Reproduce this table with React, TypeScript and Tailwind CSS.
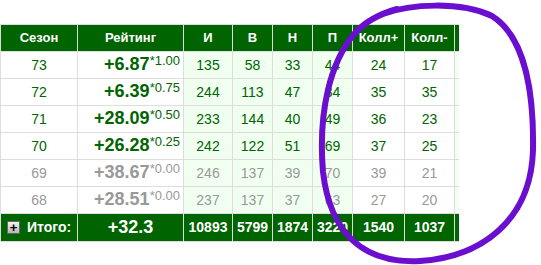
import React from 'react';

type Row = {
  season: number;
  rating: string;
  coef: string;
  i: number;
  v: number;
  n: number;
  p: number;
  plus: number;
  minus: number;
  old?: boolean;
};

const rows: Row[] = [
  { season: 73, rating: '+6.87', coef: '*1.00', i: 135, v: 58, n: 33, p: 44, plus: 24, minus: 17 },
  { season: 72, rating: '+6.39', coef: '*0.75', i: 244, v: 113, n: 47, p: 34, plus: 35, minus: 35 },
  { season: 71, rating: '+28.09', coef: '*0.50', i: 233, v: 144, n: 40, p: 49, plus: 36, minus: 23 },
  { season: 70, rating: '+26.28', coef: '*0.25', i: 242, v: 122, n: 51, p: 69, plus: 37, minus: 25 },
  { season: 69, rating: '+38.67', coef: '*0.00', i: 246, v: 137, n: 39, p: 70, plus: 39, minus: 21, old: true },
  { season: 68, rating: '+28.51', coef: '*0.00', i: 237, v: 137, n: 37, p: 63, plus: 27, minus: 20, old: true },
];

const th = 'h-[27px] border border-[#dddddd] p-0 text-center text-[13px] font-bold text-white';
const td = 'h-[27px] border border-[#dddddd] p-0 text-center text-[14px]';
const tf = 'h-[28px] border border-[#dddddd] p-0 text-center text-[14px] font-bold text-white';

export default function App() {
  return (
    <div className="relative h-[265px] w-[541px] overflow-hidden bg-white pt-6 font-['Liberation_Sans',Arial,sans-serif]">
      <div className="w-[459px] overflow-hidden">
        <table className="w-[470px] table-fixed border-collapse">
          <colgroup>
            <col className="w-[77px]" />
            <col className="w-[106px]" />
            <col className="w-[49px]" />
            <col className="w-[40px]" />
            <col className="w-[40px]" />
            <col className="w-[40px]" />
            <col className="w-[52px]" />
            <col className="w-[50px]" />
            <col className="w-[16px]" />
          </colgroup>
          <thead>
            <tr className="bg-[#006400]">
              <th className={th}>Сезон</th>
              <th className={th}>Рейтинг</th>
              <th className={th}>И</th>
              <th className={th}>В</th>
              <th className={th}>Н</th>
              <th className={th}>П</th>
              <th className={th}>Колл+</th>
              <th className={th}>Колл-</th>
              <th className={th}></th>
            </tr>
          </thead>
          <tbody>
            {rows.map(r => {
              const color = r.old ? 'text-[#999999]' : 'text-[#006400]';
              return (
                <tr key={r.season} className={color}>
                  <td className={`${td} bg-white`}>{r.season}</td>
                  <td className={`${td} bg-white pr-[3px] text-right whitespace-nowrap`}>
                    <span className="text-[18px] font-bold leading-none">{r.rating}</span>
                    <span className="relative -top-[5px] text-[13px] leading-none">{r.coef}</span>
                  </td>
                  <td className={`${td} bg-[#f0fff0]`}>{r.i}</td>
                  <td className={`${td} bg-[#f0fff0]`}>{r.v}</td>
                  <td className={`${td} bg-[#f0fff0]`}>{r.n}</td>
                  <td className={`${td} bg-[#f0fff0]`}>{r.p}</td>
                  <td className={`${td} bg-white`}>{r.plus}</td>
                  <td className={`${td} bg-white`}>{r.minus}</td>
                  <td className={`${td} bg-[#f0fff0]`}></td>
                </tr>
              );
            })}
          </tbody>
          <tfoot>
            <tr className="bg-[#006400]">
              <td className={`${tf} text-left`}>
                <div className="flex items-center gap-[7px] pl-[6px]">
                  <span className="flex h-[13px] w-[13px] items-center justify-center border border-[#666] bg-gradient-to-b from-[#f4f4f4] to-[#b5b5b5] text-[13px] font-bold leading-none text-black">+</span>
                  <span>Итого:</span>
                </div>
              </td>
              <td className={`${tf} text-[18px]`}>+32.3</td>
              <td className={tf}>10893</td>
              <td className={tf}>5799</td>
              <td className={tf}>1874</td>
              <td className={tf}>3220</td>
              <td className={tf}>1540</td>
              <td className={tf}>1037</td>
              <td className={tf}></td>
            </tr>
          </tfoot>
        </table>
      </div>
      <svg className="pointer-events-none absolute left-0 top-0" width="541" height="265" viewBox="0 0 541 265">
        <path
          d="M 383 14 C 410 4, 460 1, 492 16 C 524 36, 534 90, 533 150 C 531 220, 482 257, 420 261 C 362 264, 330 232, 323 172 C 318 112, 330 62, 355 33 C 364 23, 376 15, 397 9"
          fill="none"
          stroke="#6a0fcf"
          strokeWidth="6"
          strokeLinecap="round"
        />
      </svg>
    </div>
  );
}
